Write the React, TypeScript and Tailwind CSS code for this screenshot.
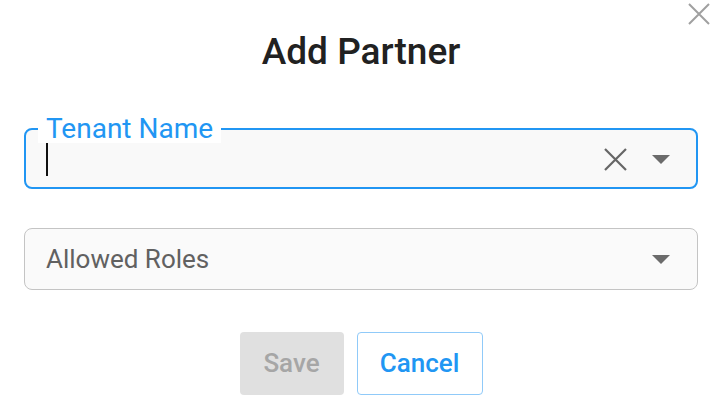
function Caret() {
  return (
    <svg width="18" height="9" viewBox="0 0 18 9" className="shrink-0">
      <path d="M0 0h18L9 9z" fill="#6b6b6b" />
    </svg>
  )
}

function Cross({ size, stroke, color }: { size: number; stroke: number; color: string }) {
  return (
    <svg width={size} height={size} viewBox={`0 0 ${size} ${size}`} className="shrink-0">
      <path
        d={`M1 1L${size - 1} ${size - 1}M${size - 1} 1L1 ${size - 1}`}
        stroke={color}
        strokeWidth={stroke}
        fill="none"
      />
    </svg>
  )
}

export default function App() {
  return (
    <div
      className="relative w-[711px] h-[415px] bg-white overflow-hidden"
      style={{ fontFamily: 'Roboto, "Noto Sans", sans-serif' }}
    >
      <button className="absolute top-[3px] right-[1px]">
        <Cross size={22} stroke={2} color="#a0a0a0" />
      </button>

      <div className="flex flex-col pl-6 pr-[13px]">
        <h2 className="text-center text-[37px] font-medium text-[#212121] leading-none pt-[33px]">
          Add Partner
        </h2>

        <fieldset className="mt-[45px] border-2 border-[#2196f3] rounded-lg bg-[#f9f9f9] p-0 pb-[12px]">
          <legend className="ml-3 px-2 text-[28px] leading-none text-[#2196f3] bg-white">Tenant Name</legend>
          <div className="flex items-center h-[32px] pl-5 pr-[26px]">
            <div className="w-[1.5px] h-[33px] bg-[#111]" />
            <div className="flex-1" />
            <Cross size={23} stroke={2.2} color="#666666" />
            <div className="w-[25px]" />
            <Caret />
          </div>
        </fieldset>

        <div className="mt-[39px] h-[62px] flex items-center border border-[#c4c4c4] rounded-lg bg-[#fafafa] pl-[21px] pr-[27px]">
          <span className="flex-1 text-[26px] text-[#616161]">Allowed Roles</span>
          <Caret />
        </div>

        <div className="mt-[42px] flex justify-center gap-[13px]">
          <button
            disabled
            className="h-[63px] w-[104px] rounded bg-[#e0e0e0] text-[26px] font-medium text-[#a6a6a6]"
          >
            Save
          </button>
          <button className="h-[63px] w-[126px] rounded border border-[#90caf9] text-[26px] font-medium text-[#2196f3]">
            Cancel
          </button>
        </div>
      </div>
    </div>
  )
}
